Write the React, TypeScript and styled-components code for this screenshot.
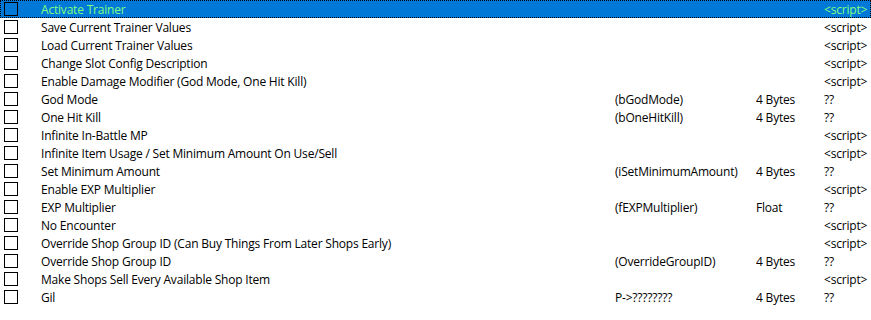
import React from "react";
import styled, { createGlobalStyle, css } from "styled-components";

const Global = createGlobalStyle`
  html, body { margin: 0; padding: 0; background: #ffffff; }
  body { font-family: "Open Sans", "Noto Sans", sans-serif; font-size: 12px; color: #000; }
`;

const List = styled.div`
  width: 871px;
  height: 320px;
  background: #ffffff;
  overflow: hidden;
  display: flex;
  flex-direction: column;
`;

const Row = styled.div<{ $selected?: boolean }>`
  box-sizing: border-box;
  height: 18px;
  display: grid;
  grid-template-columns: 40px 574px 141px 68px 1fr;
  grid-template-rows: 16px;
  align-items: start;
  white-space: nowrap;
  ${(p) =>
    p.$selected
      ? css`
          background: #0078d7;
          color: #80ff80;
          border: 1px dotted #000;
        `
      : css`
          border: 1px solid transparent;
        `}
`;

const CheckCell = styled.div`
  height: 16px;
  display: flex;
  align-items: center;
  padding-left: 3px;
`;

const Box = styled.div<{ $selected?: boolean }>`
  box-sizing: border-box;
  width: 14px;
  height: 14px;
  border: 1px solid #000;
  background: ${(p) => (p.$selected ? "transparent" : "#fff")};
`;

const Cell = styled.div`
  overflow: hidden;
  line-height: 18px;
  letter-spacing: -0.2px;
`;

type Entry = { d: string; a?: string; t?: string; v: string };

const entries: Entry[] = [
  { d: "Activate Trainer", v: "<script>" },
  { d: "Save Current Trainer Values", v: "<script>" },
  { d: "Load Current Trainer Values", v: "<script>" },
  { d: "Change Slot Config Description", v: "<script>" },
  { d: "Enable Damage Modifier (God Mode, One Hit Kill)", v: "<script>" },
  { d: "God Mode", a: "(bGodMode)", t: "4 Bytes", v: "??" },
  { d: "One Hit Kill", a: "(bOneHitKill)", t: "4 Bytes", v: "??" },
  { d: "Infinite In-Battle MP", v: "<script>" },
  { d: "Infinite Item Usage / Set Minimum Amount On Use/Sell", v: "<script>" },
  { d: "Set Minimum Amount", a: "(iSetMinimumAmount)", t: "4 Bytes", v: "??" },
  { d: "Enable EXP Multiplier", v: "<script>" },
  { d: "EXP Multiplier", a: "(fEXPMultiplier)", t: "Float", v: "??" },
  { d: "No Encounter", v: "<script>" },
  { d: "Override Shop Group ID (Can Buy Things From Later Shops Early)", v: "<script>" },
  { d: "Override Shop Group ID", a: "(OverrideGroupID)", t: "4 Bytes", v: "??" },
  { d: "Make Shops Sell Every Available Shop Item", v: "<script>" },
  { d: "Gil", a: "P->????????", t: "4 Bytes", v: "??" },
];

export default function App() {
  return (
    <>
      <Global />
      <List>
        {entries.map((e, i) => (
          <Row key={i} $selected={i === 0}>
            <CheckCell>
              <Box $selected={i === 0} />
            </CheckCell>
            <Cell>{e.d}</Cell>
            <Cell>{e.a ?? ""}</Cell>
            <Cell>{e.t ?? ""}</Cell>
            <Cell>{e.v}</Cell>
          </Row>
        ))}
      </List>
    </>
  );
}
